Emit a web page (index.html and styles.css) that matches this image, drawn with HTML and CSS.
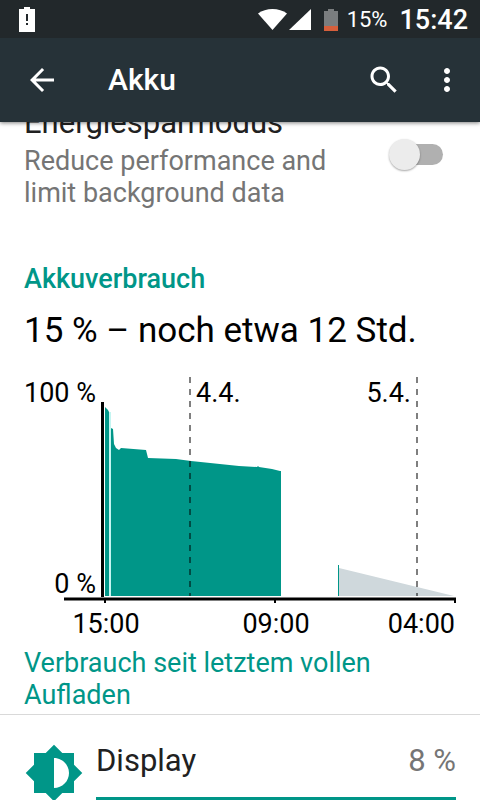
FILE: index.html
```html
<!DOCTYPE html>
<html lang="de">
<head>
<meta charset="utf-8">
<meta name="viewport" content="width=device-width, initial-scale=1">
<title>Akku</title>
<link rel="stylesheet" href="styles.css">
</head>
<body>
<div class="screen">
  <header class="top">
    <div class="status-bar">
      <svg class="status-alert" width="16" height="25" viewBox="0 0 16 25" aria-hidden="true">
        <path fill="#fff" d="M5 0h6v2h5v23H0V2h5z"/>
        <path fill="#22282b" d="M7 7h2v7H7zM7 16h2v2H7z"/>
      </svg>
      <svg class="status-wifi" width="29" height="21" viewBox="0 0 29 21" aria-hidden="true">
        <path fill="#fff" d="M14.500 21L0 4.500C4 1.500 9 0 14.500 0S25 1.500 29 4.500z"/>
      </svg>
      <svg class="status-signal" width="22" height="21" viewBox="0 0 22 21" aria-hidden="true">
        <path fill="#fff" d="M22 0v21H0z"/>
      </svg>
      <svg class="status-battery" width="14" height="22" viewBox="0 0 14 22" aria-hidden="true">
        <path fill="#7a7d7f" d="M4 0h6v2h4v15H0V2h4z"/>
        <path fill="#d65f3c" d="M0 17h14v5H0z"/>
      </svg>
      <span class="status-percent">15%</span>
      <time class="status-clock">15:42</time>
    </div>
    <div class="app-bar">
      <button class="icon-button" type="button" aria-label="Zurück">
        <svg width="36" height="36" viewBox="0 0 24 24" aria-hidden="true"><path fill="#fff" d="M20 11H7.830l5.590-5.590L12 4l-8 8 8 8 1.410-1.410L7.830 13H20v-2z"/></svg>
      </button>
      <h1 class="app-title">Akku</h1>
      <button class="icon-button" type="button" aria-label="Suchen">
        <svg width="36" height="36" viewBox="0 0 24 24" aria-hidden="true"><path fill="#fff" d="M15.500 14h-.79l-.28-.27C15.410 12.590 16 11.110 16 9.500 16 5.910 13.090 3 9.500 3S3 5.910 3 9.500 5.910 16 9.500 16c1.610 0 3.090-.59 4.230-1.570l.27.28v.79l5 4.990L20.490 19l-4.990-5zm-6 0C7.010 14 5 11.990 5 9.500S7.010 5 9.500 5 14 7.010 14 9.500 11.990 14 9.500 14z"/></svg>
      </button>
      <button class="icon-button menu-button" type="button" aria-label="Weitere Optionen">
        <svg width="36" height="36" viewBox="0 0 24 24" aria-hidden="true"><path fill="#fff" d="M12 8c1.100 0 2-.9 2-2s-.9-2-2-2-2 .9-2 2 .9 2 2 2zm0 2c-1.100 0-2 .9-2 2s.9 2 2 2 2-.9 2-2-.9-2-2-2zm0 6c-1.100 0-2 .9-2 2s.9 2 2 2 2-.9 2-2-.9-2-2-2z"/></svg>
      </button>
    </div>
  </header>

  <main class="content">
    <section class="saver">
      <label class="saver-text" for="saver">
        <span class="saver-title">Energiesparmodus</span>
        <span class="saver-summary">Reduce performance and limit background data</span>
      </label>
      <input class="switch" id="saver" type="checkbox" role="switch">
    </section>

    <section class="usage">
      <h2 class="section-title">Akkuverbrauch</h2>
      <p class="headline">15 % – noch etwa 12 Std.</p>
      <svg class="chart" viewBox="0 0 432 268" role="img" aria-label="Akkustand im Zeitverlauf">
        <path class="level" d="M81 224V35l3 3 1 2V224z"/>
        <path class="gap" d="M85 40h2V224h-2z"/>
        <path class="level" d="M87 224V56l2 1 1 15 2 4 3 2 2-2 25 2 2 8 28 1 15 2 48 5 18 1 1-1 1 1 13 2 8 2h1V224z"/>
        <path class="forecast" d="M315 196L430 224H315z"/>
        <path class="level" d="M314 193h1V224h-1z"/>
        <path class="day" d="M166 5V224M393 5V224"/>
        <path class="axis" d="M78.500 30V225M40 227h392"/>
        <path class="tick" d="M81 228v3M251 228v3M431 228v3"/>
        <text x="72" y="30" text-anchor="end">100 %</text>
        <text x="72" y="221" text-anchor="end">0 %</text>
        <text x="172" y="30">4.4.</text>
        <text x="387" y="30" text-anchor="end">5.4.</text>
        <text x="82" y="261" text-anchor="middle">15:00</text>
        <text x="252" y="261" text-anchor="middle">09:00</text>
        <text x="431" y="261" text-anchor="end">04:00</text>
      </svg>
      <p class="since">Verbrauch seit letztem vollen Aufladen</p>
    </section>

    <section class="consumer">
      <svg class="consumer-icon" width="60" height="60" viewBox="0 0 24 24" aria-hidden="true"><path fill="#009688" d="M20 15.310L23.310 12 20 8.690V4h-4.690L12 .69 8.690 4H4v4.690L.69 12 4 15.310V20h4.690L12 23.310 15.310 20H20v-4.690zM12 18V6c3.310 0 6 2.690 6 6s-2.690 6-6 6z"/></svg>
      <div class="consumer-body">
        <div class="consumer-line">
          <span class="consumer-name">Display</span>
          <span class="consumer-share">8 %</span>
        </div>
        <div class="bar"></div>
      </div>
    </section>
  </main>
</div>
</body>
</html>
```
FILE: styles.css
```css
* {
  box-sizing: border-box;
}

body {
  margin: 0;
  background: #fff;
  color: #212121;
  font-family: Roboto, sans-serif;
  font-size: 27px;
  line-height: 32px;
}

h1, h2, p {
  margin: 0;
}

.screen {
  display: flex;
  flex-direction: column;
  height: 100vh;
  overflow: hidden;
}

.top {
  position: relative;
  z-index: 1;
  flex: none;
  color: #fff;
  background: #263238;
  box-shadow: 0 1px 4px rgba(0, 0, 0, 0.5);
}

.status-bar {
  display: flex;
  align-items: center;
  height: 38px;
  padding: 1px 12px 0 19px;
  background: #22282b;
}

.status-alert {
  margin-right: auto;
}

.status-signal {
  margin: 0 13px 0 2px;
}

.status-percent {
  margin: 0 12px 0 9px;
  font-size: 22px;
}

.status-clock {
  font-size: 27px;
  font-weight: 500;
}

.app-bar {
  display: flex;
  align-items: center;
  height: 84px;
  padding-left: 24px;
}

.icon-button {
  display: flex;
  flex: none;
  padding: 0;
  border: 0;
  background: none;
}

.app-title {
  flex: 1;
  padding-left: 48px;
  font-size: 30px;
  font-weight: 500;
}

.menu-button {
  margin: 0 15px 0 27px;
}

.content {
  flex: 1;
  min-height: 0;
}

.saver {
  display: flex;
  align-items: center;
  justify-content: space-between;
  margin-top: -17px;
  padding: 0 37px 0 24px;
}

.saver-text {
  width: 320px;
}

.saver-title,
.saver-summary {
  display: block;
}

.saver-title {
  padding-bottom: 4px;
  font-size: 31px;
  line-height: 36px;
}

.saver-summary {
  color: #757575;
}

.switch {
  position: relative;
  width: 54px;
  height: 32px;
  margin: 0 0 4px;
  appearance: none;
}

.switch::before {
  content: "";
  position: absolute;
  inset: 5px 0 6px 6px;
  border-radius: 11px;
  background: #b0b0b0;
}

.switch::after {
  content: "";
  position: absolute;
  top: 0;
  left: 0;
  width: 31px;
  height: 31px;
  border-radius: 50%;
  background: #ececec;
  box-shadow: 0 1px 2px rgba(0, 0, 0, 0.35);
}

.usage {
  padding: 54px 24px 3px;
  border-bottom: 1px solid #d9d9d9;
}

.section-title {
  color: #009688;
  font-size: 27px;
  font-weight: 500;
}

.headline {
  padding: 15px 0 20px;
  color: #000;
  font-size: 35px;
  line-height: 42px;
}

.chart {
  display: block;
  width: 100%;
}

.chart text {
  fill: #000;
  font-size: 27px;
}

.level {
  fill: #009688;
}

.gap {
  fill: #c4f5f1;
}

.forecast {
  fill: #cfd8dc;
}

.day {
  fill: none;
  stroke: rgba(0, 0, 0, 0.5);
  stroke-width: 2;
  stroke-dasharray: 6 6;
}

.axis {
  fill: none;
  stroke: #000;
  stroke-width: 3;
}

.tick {
  fill: none;
  stroke: #000;
  stroke-width: 2;
}

.since {
  padding-top: 7px;
  color: #009688;
}

.consumer {
  display: flex;
  gap: 12px;
  padding: 28px 24px 0;
}

.consumer-icon {
  flex: none;
}

.consumer-body {
  flex: 1;
}

.consumer-line {
  display: flex;
  justify-content: space-between;
  padding-bottom: 18px;
  font-size: 31px;
  line-height: 36px;
}

.consumer-share {
  color: #757575;
}

.bar {
  height: 6px;
  background: #009688;
}
```
